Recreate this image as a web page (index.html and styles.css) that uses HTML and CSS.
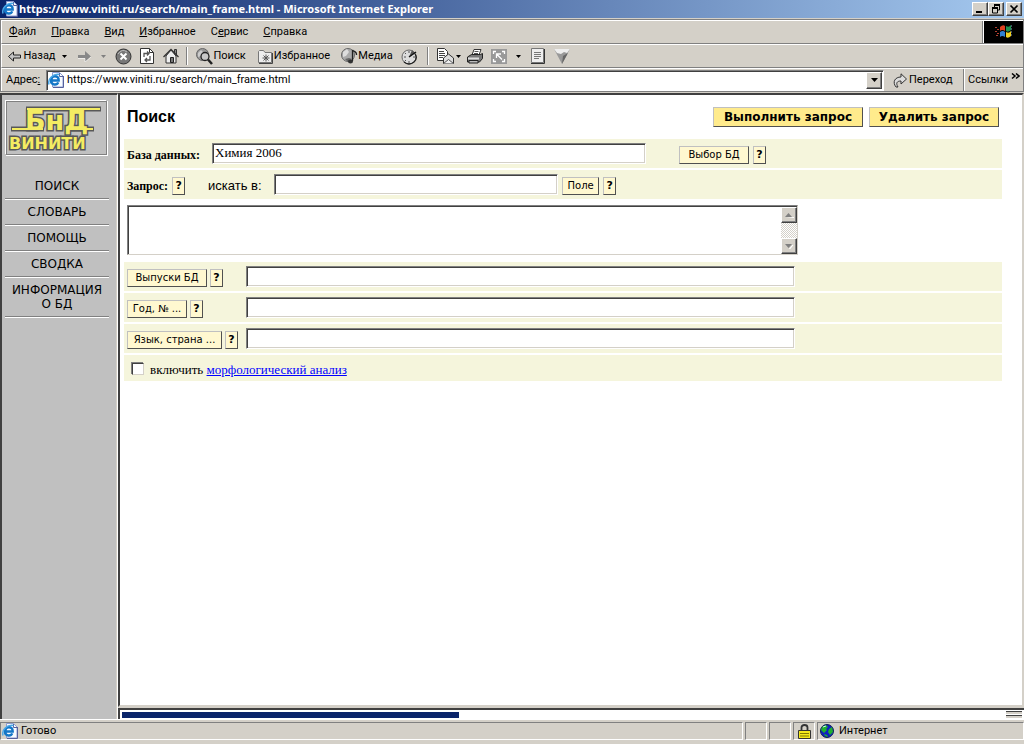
FILE: index.html
```html
<!DOCTYPE html>
<html lang="ru">
<head>
<meta charset="utf-8">
<title>Поиск</title>
<link rel="stylesheet" href="styles.css">
</head>
<body>
<svg class="defs" aria-hidden="true">
  <symbol id="ie" viewBox="0 0 16 16">
    <path d="M4.500.500h7l3.500 3.500v11h-10.500z" fill="#f8fbff" stroke="#8c9cd0"/>
    <path d="M11.500 1v3.500H15M15.500 4v11.500H5" fill="none" stroke="#56609c"/>
    <path d="M2.500 8.500h8.200c.2-6-7.700-5.500-7.700 0 0 5 6 5 7.200 1.800" fill="none" stroke="#1377c8" stroke-width="2.400"/>
    <path d="M1 12.500C-.5 7 5 1.500 11.500 2.500" fill="none" stroke="#4aa8e8" stroke-width="1.500"/>
  </symbol>
  <symbol id="caret" viewBox="0 0 7 4"><path d="M0 0h7L3.500 4z"/></symbol>
  <symbol id="arrow" viewBox="0 0 13 11"><path d="M12.500 4h-7V1l-5 4.500 5 4.500V7h7z" fill="#c4c4c4" stroke="#222"/></symbol>
</svg>

<header class="titlebar">
  <svg class="icon16"><use href="#ie"/></svg>
  <span class="title">https://www.viniti.ru/search/main_frame.html - Microsoft Internet Explorer</span>
  <div class="winbtns">
    <button type="button" aria-label="Свернуть"><svg width="12" height="10"><path d="M2 7h6v2H2z"/></svg></button>
    <button type="button" aria-label="Восстановить"><svg width="12" height="10"><path d="M4 1.500h6M4.500 1v3M9.500 1v5H7M2 4.500h5M2.500 4v5h5V4" fill="none" stroke="#000"/><path d="M4 0h6v2H4zM2 3h6v2H2z"/></svg></button>
    <button type="button" class="close" aria-label="Закрыть"><svg width="12" height="10"><path d="M2.500 1.500l7 7M9.500 1.500l-7 7" stroke="#000" stroke-width="1.700"/></svg></button>
  </div>
</header>

<div class="chrome">
  <div class="menurow">
    <nav class="menu">
      <a href="#"><u>Ф</u>айл</a><a href="#"><u>П</u>равка</a><a href="#"><u>В</u>ид</a><a href="#"><u>И</u>збранное</a><a href="#">С<u>е</u>рвис</a><a href="#"><u>С</u>правка</a>
    </nav>
    <div class="flag">
      <svg width="20" height="18" viewBox="0 0 20 18">
        <path d="M1 4h2v1H1zM3 6h2v1H3zM1 8h2v1H1zM3 10h2v1H3zM2 12h2v1H2z" fill="#b04030"/>
        <path d="M6 4q3-3 5-1v5q-3-2-5 0z" fill="#e04020"/><path d="M12 3q3 2 5-1v5q-3 3-5 1z" fill="#209050"/>
        <path d="M6 9q3-2 5 0v5q-3-2-5 0z" fill="#3080d0"/><path d="M12 9q3 2 5-1v5q-3 3-5 1z" fill="#f0d020"/>
        <path d="M17.500 2v12" stroke="#456" stroke-dasharray="2 1"/>
      </svg>
    </div>
  </div>

  <div class="toolbar">
    <button type="button" class="w-back"><svg width="13" height="11"><use href="#arrow"/></svg>Назад</button>
    <button type="button" class="w-caret" aria-label="История переходов"><svg width="5" height="3"><use href="#caret"/></svg></button>
    <button type="button" class="w-icon" aria-label="Вперед"><svg width="13" height="11" viewBox="0 0 13 11"><path d="M0 4h7V0l6 5.500L7 11V7H0z" fill="#888"/><path d="M0 7.500h7V11l6-5" fill="none" stroke="#fff" stroke-width=".6"/></svg></button>
    <button type="button" class="w-caret dim" aria-label="Далее"><svg width="5" height="3"><use href="#caret"/></svg></button>
    <button type="button" class="w-icon" aria-label="Остановить"><svg width="17" height="17" viewBox="0 0 17 17"><circle cx="8.500" cy="8.500" r="7.500" fill="#777" stroke="#333"/><path d="M3 6q4-6 9-2" fill="none" stroke="#bbb"/><path d="M5.500 5.500l6 6M11.500 5.500l-6 6" stroke="#fff" stroke-width="2"/></svg></button>
    <button type="button" class="w-icon" aria-label="Обновить"><svg width="14" height="16" viewBox="0 0 14 16"><path d="M.5.500h9l4 4v11H.5z" fill="#fff" stroke="#333"/><path d="M9.500.500v4h4" fill="none" stroke="#333"/><path d="M4 9V5.500h5M7 3.500l2 2-2 2M10 8v4H5M7 10l-2 2 2 2" fill="none" stroke="#555" stroke-width="1.300"/></svg></button>
    <button type="button" class="w-icon" aria-label="Домой"><svg width="16" height="16" viewBox="0 0 16 16"><path d="M11.500 1.500h2v6h-2z" fill="#888" stroke="#333"/><path d="M3 8l5-6 5 6v7H3z" fill="#eee" stroke="#333"/><path d="M.500 9L8 1.500l7.500 7.500" fill="none" stroke="#333" stroke-width="1.300"/><path d="M7.500 9.500h3v5h-3z" fill="#777" stroke="#222"/></svg></button>
    <i class="sep"></i>
    <button type="button" class="w-label"><svg width="17" height="17" viewBox="0 0 17 17"><circle cx="6.500" cy="6.500" r="6" fill="#999" stroke="#666"/><path d="M2 5l3-3 2 2-2 4-3 1z" fill="#ccc"/><circle cx="9" cy="8.500" r="4" fill="#c8c8c8" stroke="#222" stroke-width="1.300"/><path d="M12 11.500l4 4.500" stroke="#222" stroke-width="2.500"/></svg>Поиск</button>
    <button type="button" class="w-fav"><svg width="16" height="15" viewBox="0 0 16 15"><path d="M.500 13.500V2.500l1-1h4l1.500 2h6.500v10z" fill="#eee" stroke="#777"/><path d="M1 14.500h13.500V4" fill="none" stroke="#444"/><path d="M8 5.500v7M4.500 9h7M5.500 6.500l5 5M10.500 6.500l-5 5" stroke="#555"/></svg>Избранное</button>
    <button type="button" class="w-label"><svg width="17" height="16" viewBox="0 0 17 16"><circle cx="7" cy="7" r="6.500" fill="#aaa" stroke="#666"/><path d="M2 4l4-3 2 3-3 4-3 1z" fill="#ddd"/><path d="M8 10l3 1-4 3-3-3z" fill="#666"/><path d="M11.500 13V2c1 2 4.500 1 4 5" fill="none" stroke="#222" stroke-width="1.300"/><ellipse cx="9.500" cy="13.500" rx="2.500" ry="2" fill="#333"/></svg>Медиа</button>
    <button type="button" class="w-icon" aria-label="Журнал"><svg width="17" height="17" viewBox="0 0 17 17"><circle cx="8" cy="9" r="7" fill="#ddd" stroke="#666"/><path d="M13 14q4-4 1-8M3 14q5 4 10 0" fill="none" stroke="#222" stroke-width="1.300"/><path d="M8 3v2M3 9h2M8 13v2M12 9h2M4 5l1 1M4 13l1-1" stroke="#555"/><path d="M8 9l3-7 3 3z" fill="#555"/><path d="M8 9l7-5" stroke="#111" stroke-width="1.500"/></svg></button>
    <i class="sep sep-wide"></i>
    <button type="button" class="w-mail" aria-label="Почта"><svg width="17" height="16" viewBox="0 0 17 16"><path d="M.500.500h7l3 3v9H.500z" fill="#fff" stroke="#333"/><path d="M2 3.500h5M2 5.500h6M2 7.500h6M2 9.500h4" stroke="#444"/><path d="M6.500 10l5-4 5 4v5.500h-10z" fill="#ddd" stroke="#333"/><path d="M6.500 15.500l5-4 5 4" fill="#eee" stroke="#555"/></svg><svg width="5" height="3"><use href="#caret"/></svg></button>
    <button type="button" class="w-icon" aria-label="Печать"><svg width="16" height="15" viewBox="0 0 16 15"><path d="M5 6l2-5.500h7L12 6z" fill="#fff" stroke="#333"/><path d="M7.500 2.500h4M7 4.500h4" stroke="#555"/><path d="M.500 8l4-2.500h9l2-1v5l-3 3.500H.500z" fill="#777" stroke="#222"/><path d="M1 8.500h11v2H1z" fill="#ddd"/><path d="M2 11.500h9v2.500H2z" fill="#bbb" stroke="#222"/></svg></button>
    <button type="button" class="w-icon" aria-label="Во весь экран"><svg width="16" height="15" viewBox="0 0 16 15"><path d="M0 0h16v15H0z" fill="#999"/><path d="M2.500 5V2.500H5M11 2.500h2.500V5M2.500 10v2.500H5M13.500 10v2.500H11M11 10.500L6 5.500M5.500 9V5H10" fill="none" stroke="#fff" stroke-width="1.300"/></svg></button>
    <button type="button" class="w-caret" aria-label="Параметры"><svg width="5" height="3"><use href="#caret"/></svg></button>
    <button type="button" class="w-icon" aria-label="Правка"><svg width="16" height="16" viewBox="0 0 16 16"><path d="M1.500.500h12v14h-12z" fill="#eee" stroke="#777"/><path d="M14.500 1v14.500H1" fill="none" stroke="#333"/><path d="M4 4.500h7M4 6.500h7M4 8.500h7M4 10.500h5" stroke="#777"/></svg></button>
    <button type="button" class="w-icon" aria-label="Загрузки"><svg width="16" height="15" viewBox="0 0 16 15"><path d="M0 0h16L8 15z" fill="#999"/><path d="M0 0h16l-3 4-3-1-3 2-4-1z" fill="#eee"/><path d="M9 7l5-3-6 11z" fill="#666"/></svg></button>
  </div>

  <div class="addressbar">
    <label for="url">Адрес<u>:</u></label>
    <div class="combo">
      <svg class="icon16"><use href="#ie"/></svg>
      <input id="url" type="text" value="https://www.viniti.ru/search/main_frame.html">
      <button type="button" class="raised" aria-label="Открыть список"><svg width="7" height="4"><use href="#caret"/></svg></button>
    </div>
    <button type="button" class="go"><svg width="15" height="15" viewBox="0 0 15 15"><path d="M3 14C-1 9 2 4 8 4V.800L13.500 6 8 11V8C4 8 2.500 10 5 14z" fill="#ddd" stroke="#333"/></svg>Переход</button>
    <button type="button" class="links">Ссылки<svg width="9" height="7" viewBox="0 0 9 7"><path d="M1 .500l3 2.500-3 2.500M5 .500l3 2.500-3 2.500" fill="none" stroke="#000" stroke-width="1.500"/></svg></button>
  </div>
</div>

<div class="workspace">
  <aside class="sidebar">
    <div class="logo">
      <svg width="98" height="52" viewBox="0 0 98 52" role="img" aria-label="БнД ВИНИТИ">
        <g class="logo-art">
          <path d="M20 8H95M5 28H38M62 28H88"/>
          <text class="big" x="19" y="29">БнД</text>
          <path class="fill" d="M21 8H94M6 28H37M63 28H87"/>
          <text class="small" x="3" y="48">ВИНИТИ</text>
        </g>
      </svg>
    </div>
    <nav class="sections">
      <a href="#">ПОИСК</a>
      <a href="#">СЛОВАРЬ</a>
      <a href="#">ПОМОЩЬ</a>
      <a href="#">СВОДКА</a>
      <a href="#">ИНФОРМАЦИЯ<br>О БД</a>
    </nav>
  </aside>

  <div class="frames">
    <main class="page">
      <form>
        <div class="head">
          <h1>Поиск</h1>
          <button type="button" class="btn main run">Выполнить запрос</button>
          <button type="button" class="btn main clear">Удалить запрос</button>
        </div>
        <div class="row">
          <label class="strong base" for="db">База данных:</label>
          <input class="field db" id="db" type="text" value="Химия 2006">
          <button type="button" class="btn choose">Выбор БД</button>
          <button type="button" class="btn help" aria-label="Справка">?</button>
        </div>
        <div class="row">
          <span class="strong">Запрос:</span>
          <button type="button" class="btn help" aria-label="Справка">?</button>
          <label class="where" for="where">искать в:</label>
          <input class="field in" id="where" type="text">
          <button type="button" class="btn pick">Поле</button>
          <button type="button" class="btn help" aria-label="Справка">?</button>
        </div>
        <div class="query">
          <textarea aria-label="Текст запроса"></textarea>
          <div class="scroll">
            <button type="button" class="raised" aria-label="Вверх"><svg width="9" height="5" viewBox="0 0 9 5"><path d="M1 5h8v-1z" fill="#fff"/><path d="M0 4h7L3.500 0z" fill="#808080"/></svg></button>
            <button type="button" class="raised" aria-label="Вниз"><svg width="9" height="5" viewBox="0 0 9 5"><path d="M8 1L4.500 5z" stroke="#fff"/><path d="M0 0h7L3.500 4z" fill="#808080"/></svg></button>
          </div>
        </div>
        <div class="row filter">
          <div class="lead"><button type="button" class="btn issues">Выпуски БД</button><button type="button" class="btn help" aria-label="Справка">?</button></div>
          <input class="field long" type="text" aria-label="Выпуски БД">
        </div>
        <div class="row filter">
          <div class="lead"><button type="button" class="btn year">Год, № ...</button><button type="button" class="btn help" aria-label="Справка">?</button></div>
          <input class="field long" type="text" aria-label="Год, номер">
        </div>
        <div class="row filter">
          <div class="lead"><button type="button" class="btn lang">Язык, страна ...</button><button type="button" class="btn help" aria-label="Справка">?</button></div>
          <input class="field long" type="text" aria-label="Язык, страна">
        </div>
        <div class="row check">
          <input type="checkbox" id="morph">
          <label for="morph">включить <a href="#">морфологический анализ</a></label>
        </div>
      </form>
    </main>
    <div class="lower"><i class="bar"></i><i class="grip"></i></div>
  </div>
</div>

<footer class="status">
  <div class="cell grow"><svg class="icon16"><use href="#ie"/></svg>Готово</div>
  <div class="cell"></div>
  <div class="cell"></div>
  <div class="cell"><svg width="13" height="15" viewBox="0 0 13 15"><path d="M3.500 7V3.500q0-2.500 3-2.500t3 2.500V7" fill="none" stroke="#333" stroke-width="1.800"/><path d="M.500 6.500h12v8H.500z" fill="#f4e81c" stroke="#333"/><path d="M2 9.500h9M2 12h9" stroke="#807800"/></svg></div>
  <div class="cell zone"><svg width="14" height="14" viewBox="0 0 14 14"><circle cx="7" cy="7" r="6.500" fill="#1020c0" stroke="#102050"/><path d="M2 3l4-2 2 2-2 2 1 1-3 3-3-3zM9 5l3-2 1 5-3 3-2-3zM4 10l3 1 1 2-3-1z" fill="#20b030"/><path d="M3 3l3-1" stroke="#cfe"/></svg>Интернет</div>
</footer>
</body>
</html>
```

FILE: styles.css
```css
* { box-sizing: border-box; }

body {
  margin: 0;
  min-height: 100vh;
  display: flex;
  flex-direction: column;
  background: #d4d0c8;
  color: #000;
  font: 11px/14px Roboto, sans-serif;
}

button, input, textarea { font: inherit; color: inherit; margin: 0; padding: 0; border-radius: 0; }
svg { display: block; flex: none; }
.defs { position: absolute; width: 0; height: 0; }
.icon16 { width: 16px; height: 16px; }

.raised, .winbtns button {
  display: flex;
  align-items: center;
  justify-content: center;
  background: #d4d0c8;
  border: 1px solid;
  border-color: #fff #404040 #404040 #fff;
  box-shadow: inset -1px -1px #808080;
}

/* Title bar */
.titlebar {
  display: flex;
  align-items: center;
  gap: 1px;
  height: 18px;
  padding: 0 2px;
  background: linear-gradient(90deg, #0a246a, #a6caf0);
  color: #fff;
}
.title { flex: 1; font-family: "Noto Sans", sans-serif; font-weight: bold; white-space: nowrap; overflow: hidden; }
.winbtns { display: flex; }
.winbtns button { width: 16px; height: 14px; }
.winbtns .close { margin-left: 2px; }

/* Menu, tools and address */
.chrome { margin-top: 1px; border: 1px solid #808080; }
.menurow, .toolbar, .addressbar {
  display: flex;
  align-items: center;
  height: 24px;
  border-top: 1px solid #fff;
  border-left: 1px solid #fff;
  border-bottom: 1px solid #808080;
}
.addressbar { height: 23px; border-bottom: 0; }
.menu { display: flex; flex: 1; gap: 15px; padding-left: 7px; }
.menu a { color: #000; text-decoration: none; }
.flag {
  display: flex;
  align-items: center;
  justify-content: center;
  align-self: stretch;
  width: 39px;
  background: #000;
  box-shadow: -1px 0 #fff, -2px 0 #808080;
}

.toolbar { padding-left: 5px; overflow: hidden; }
.toolbar button {
  display: flex;
  align-items: center;
  justify-content: center;
  flex: none;
  gap: 2px;
  height: 20px;
  border: 0;
  background: none;
}
.toolbar .w-back { width: 50px; }
.toolbar .w-caret { width: 15px; }
.toolbar .w-icon { width: 24px; }
.toolbar .w-mail { width: 28px; }
.toolbar .w-label { width: 60px; gap: 0; }
.toolbar .w-fav { width: 86px; gap: 0; }
.toolbar .dim { color: #808080; fill: #808080; }
.sep { width: 2px; height: 18px; margin: 0 3px; background: linear-gradient(90deg, #808080 1px, #fff 1px); }
.sep-wide { margin: 0 6px; }

.addressbar label { flex: none; width: 44px; padding-left: 4px; }
.combo {
  display: flex;
  align-items: center;
  flex: 1;
  gap: 3px;
  height: 21px;
  padding-left: 1px;
  background: #fff;
  border: 1px solid;
  border-color: #808080 #fff #fff #808080;
  box-shadow: inset 1px 1px #404040;
}
.combo input { flex: 1; min-width: 0; border: 0; outline: 0; background: none; }
.combo .raised { width: 16px; height: 17px; margin-right: 1px; }
.go, .links { display: flex; align-items: center; border: 0; background: none; }
.go { gap: 1px; width: 79px; padding-left: 9px; }
.links {
  justify-content: space-between;
  width: 60px;
  height: 22px;
  padding: 0 3px 0 4px;
  border-left: 1px solid #808080;
  box-shadow: inset 1px 0 #fff;
}
.links svg { margin-bottom: 8px; }

/* Frames */
.workspace { flex: 1; display: flex; margin-top: 1px; }
.sidebar {
  width: 118px;
  padding: 5px 8px 0 3px;
  background: #c0c0c0;
  border-top: 2px solid #404040;
  border-left: 2px solid #404040;
  border-right: 1px solid #fff;
  box-shadow: inset -1px 0 #d4d0c8;
}
.logo {
  width: 102px;
  height: 55px;
  margin-bottom: 19px;
  border: 1px solid;
  border-color: #fff #808080 #808080 #fff;
  box-shadow: 1px 1px #fff, inset 1px 1px #808080;
}
.logo-art { font-family: "DejaVu Sans", sans-serif; font-weight: bold; }
.logo-art text { fill: #f4ec62; stroke: #585858; stroke-width: 3px; paint-order: stroke; }
.logo-art .big { font-size: 27px; }
.logo-art .small { font-size: 16px; }
.logo-art path { stroke: #585858; stroke-width: 5px; }
.logo-art .fill { stroke: #f4ec62; stroke-width: 2px; }
.sections { font: 12px/14px "DejaVu Sans", sans-serif; }
.sections a {
  display: block;
  padding: 5px 0;
  border-bottom: 1px solid #808080;
  box-shadow: 0 1px #fff;
  margin-bottom: 1px;
  color: #000;
  text-align: center;
  text-decoration: none;
}

.frames { flex: 1; min-width: 0; display: flex; flex-direction: column; }
.page {
  flex: 1;
  padding: 0 20px 0 4px;
  background: #fff;
  border: 2px solid;
  border-color: #404040 #d4d0c8 #d4d0c8 #404040;
}
.lower {
  display: flex;
  justify-content: space-between;
  align-items: center;
  height: 11px;
  margin-top: 1px;
  padding: 0 2px;
  background: #fff;
  border-top: 2px solid #404040;
  border-left: 2px solid #404040;
}
.bar { width: 37.4%; height: 6px; background: #0a246a; }
.grip { width: 16px; height: 8px; background: repeating-linear-gradient(#404040 0 1px, #d4d0c8 1px 3px, #fff 3px 4px); }

/* Search form */
form { display: grid; gap: 2px; }
.head {
  display: flex;
  align-items: center;
  gap: 6px;
  height: 42px;
  padding: 2px 3px 0;
}
h1 { flex: 1; margin: 0; font: bold 16px/20px "Liberation Sans", sans-serif; }
.row {
  display: flex;
  align-items: center;
  min-height: 29px;
  gap: 4px;
  padding: 2px 3px 0;
  background: #f5f5dc;
  font: 13px/16px "Liberation Serif", serif;
}
.strong { font-size: 12px; font-weight: bold; }
.base { width: 81px; }
.where { width: 62px; margin-left: 19px; font: 13px/16px "Liberation Sans", sans-serif; }
.btn {
  height: 18px;
  padding: 0;
  background: #fff8d0;
  border: 1px solid;
  border-color: #c0c0c0 #505050 #505050 #c0c0c0;
  font: 10px/14px "DejaVu Sans", sans-serif;
  white-space: nowrap;
}
.main { height: 20px; background: #ffeb8c; font: bold 12px/16px "DejaVu Sans", sans-serif; }
.run { width: 150px; }
.clear { width: 130px; }
.help { width: 13px; font: bold 11px/14px "DejaVu Sans", sans-serif; }
.choose { width: 70px; margin-left: 29px; }
.pick { width: 37px; }
.issues { width: 80px; }
.year { width: 60px; }
.lang { width: 95px; }
.field {
  height: 21px;
  margin-bottom: 3px;
  padding: 0 2px;
  background: #fff;
  border: 1px solid;
  border-color: #808080 #fff #fff #808080;
  box-shadow: inset 1px 1px #404040, inset -1px -1px #d4d0c8;
}
.db { width: 434px; }
.in { width: 284px; }
.long { width: 549px; }
.lead { display: flex; gap: 3px; width: 115px; }
.query {
  display: flex;
  width: 671px;
  height: 50px;
  margin: 4px 3px 5px;
  border: 1px solid;
  border-color: #808080 #d4d0c8 #d4d0c8 #808080;
  box-shadow: inset 1px 1px #404040;
}
.query textarea { flex: 1; border: 0; outline: 0; resize: none; background: none; }
.scroll {
  display: flex;
  flex-direction: column;
  justify-content: space-between;
  width: 16px;
  margin-top: 1px;
  background: repeating-conic-gradient(#fff 0 25%, #d4d0c8 0 50%) 0 0 / 2px 2px;
}
.scroll .raised { width: 16px; height: 16px; }
.check { min-height: 26px; gap: 6px; padding: 3px 3px 0 8px; }
.check input {
  appearance: none;
  width: 12px;
  height: 12px;
  margin-bottom: 2px;
  background: #fff;
  border: 1px solid;
  border-color: #404040 #d4d0c8 #d4d0c8 #404040;
  box-shadow: -1px -1px #808080;
}
.check a { color: #00f; }

/* Status bar */
.status {
  display: flex;
  gap: 2px;
  height: 25px;
  padding: 2px 0 4px;
  border-top: 1px solid #fff;
}
.cell {
  display: flex;
  align-items: center;
  justify-content: center;
  width: 22px;
  border: 1px solid;
  border-color: #808080 #fff #fff #808080;
}
.grow { flex: 1; justify-content: flex-start; gap: 3px; padding-left: 1px; }
.zone { width: 207px; justify-content: flex-start; gap: 5px; padding-left: 2px; }
```
